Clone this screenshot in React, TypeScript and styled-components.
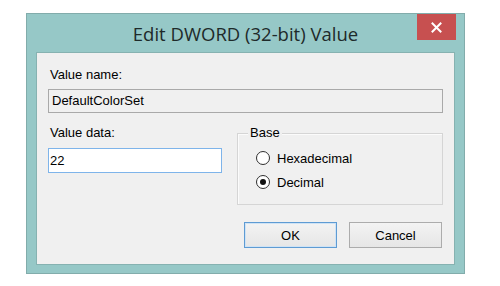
import React from "react";
import styled, { createGlobalStyle } from "styled-components";

const Global = createGlobalStyle`
  html, body { margin: 0; padding: 0; background: #ffffff; }
  body { font-family: "Liberation Sans", Arial, sans-serif; font-size: 13px; color: #000; }
  * { box-sizing: border-box; }
`;

const Window = styled.div`
  position: relative;
  margin: 13px 0 0 26px;
  width: 439px;
  height: 261px;
  border: 1px solid #82acab;
  background: #96c8c7;
  display: flex;
  flex-direction: column;
  padding: 0 9px 8px 9px;
`;

const TitleBar = styled.div`
  height: 38px;
  display: flex;
  align-items: center;
  justify-content: center;
`;

const Title = styled.span`
  font-family: "Open Sans", "Noto Sans", sans-serif;
  font-size: 18.5px;
  color: #1e2a2a;
  margin-top: 1px;
`;

const CloseButton = styled.div`
  position: absolute;
  top: 0;
  right: 8px;
  width: 39px;
  height: 26px;
  background: #c75050;
  display: flex;
  align-items: center;
  justify-content: center;
`;

const Client = styled.div`
  flex: 1;
  background: #f0f0f0;
  border: 1px solid #86b2b1;
  padding: 14px 11px 0 11px;
  display: flex;
  flex-direction: column;
`;

const Label = styled.div`
  height: 16px;
  line-height: 16px;
  margin-left: 2px;
`;

const Field = styled.div<{ $focused?: boolean; $height: number }>`
  height: ${(p) => p.$height}px;
  line-height: ${(p) => p.$height - 2}px;
  border: 1px solid ${(p) => (p.$focused ? "#7eb4ea" : "#a9a9a9")};
  background: ${(p) => (p.$focused ? "#ffffff" : "#f0f0f0")};
  padding-left: ${(p) => (p.$focused ? 1 : 3)}px;
  white-space: nowrap;
`;

const NameField = styled(Field)`
  margin-top: 6px;
`;

const Row = styled.div`
  margin-top: 12px;
  display: grid;
  grid-template-columns: 174px 206px;
  column-gap: 15px;
`;

const Column = styled.div`
  display: flex;
  flex-direction: column;
`;

const DataField = styled(Field)`
  margin-top: 7px;
`;

const Group = styled.div`
  position: relative;
  margin-top: 8px;
  height: 72px;
  border: 1px solid #d5d5d5;
  box-shadow: inset 1px 1px 0 #fbfbfb;
  padding: 12px 0 0 18px;
  display: flex;
  flex-direction: column;
`;

const Legend = styled.span`
  position: absolute;
  top: -9px;
  left: 10px;
  padding: 0 2px;
  line-height: 16px;
  background: #f0f0f0;
`;

const RadioRow = styled.div`
  height: 24px;
  display: flex;
  align-items: center;
  gap: 7px;
`;

const RadioCircle = styled.span<{ $checked?: boolean }>`
  width: 14px;
  height: 14px;
  border-radius: 50%;
  border: 1px solid #2f2f2f;
  background: #ffffff;
  display: flex;
  align-items: center;
  justify-content: center;
  &::after {
    content: "";
    width: 6px;
    height: 6px;
    border-radius: 50%;
    background: ${(p) => (p.$checked ? "#111111" : "transparent")};
  }
`;

const ButtonRow = styled.div`
  margin-top: 17px;
  display: flex;
  justify-content: flex-end;
  gap: 12px;
  padding-right: 1px;
`;

const Button = styled.div<{ $default?: boolean }>`
  width: 93px;
  height: 26px;
  border: 1px solid ${(p) => (p.$default ? "#5e9bd3" : "#acacac")};
  background: linear-gradient(#f3f3f3, #e6e6e6);
  box-shadow: ${(p) => (p.$default ? "inset 0 0 0 1px #cfe3f5" : "none")};
  display: flex;
  align-items: center;
  justify-content: center;
`;

export default function App() {
  return (
    <>
      <Global />
      <Window>
        <TitleBar>
          <Title>Edit DWORD (32-bit) Value</Title>
        </TitleBar>
        <CloseButton>
          <svg width="11" height="11" viewBox="0 0 11 11">
            <path d="M1.5 1.5 L9.5 9.5 M9.5 1.5 L1.5 9.5" stroke="#ffffff" strokeWidth="2" strokeLinecap="square" />
          </svg>
        </CloseButton>
        <Client>
          <Label>Value name:</Label>
          <NameField $height={24}>DefaultColorSet</NameField>
          <Row>
            <Column>
              <Label>Value data:</Label>
              <DataField $focused $height={25}>22</DataField>
            </Column>
            <Column>
              <Group>
                <Legend>Base</Legend>
                <RadioRow>
                  <RadioCircle />
                  <span>Hexadecimal</span>
                </RadioRow>
                <RadioRow>
                  <RadioCircle $checked />
                  <span>Decimal</span>
                </RadioRow>
              </Group>
            </Column>
          </Row>
          <ButtonRow>
            <Button $default>OK</Button>
            <Button>Cancel</Button>
          </ButtonRow>
        </Client>
      </Window>
    </>
  );
}
